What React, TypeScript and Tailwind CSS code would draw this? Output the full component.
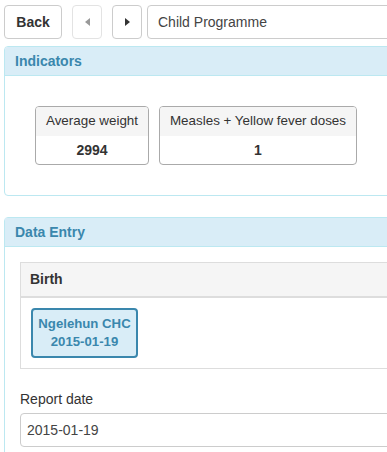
import React from "react";

const Caret: React.FC<{ dir: "left" | "right"; color: string }> = ({ dir, color }) => (
  <svg width="5" height="8" viewBox="0 0 5 8">
    {dir === "left" ? <path d="M5 0 L0 4 L5 8 Z" fill={color} /> : <path d="M0 0 L5 4 L0 8 Z" fill={color} />}
  </svg>
);

const App: React.FC = () => {
  return (
    <div className="w-[387px] h-[452px] overflow-hidden bg-white text-[14px] text-[#333] font-['Liberation_Sans',Arial,sans-serif]">
      <div className="w-[460px] pl-[4px]">
        {/* top bar */}
        <div className="flex items-center pt-[5px] h-[39px]">
          <button className="h-[34px] w-[58px] border border-[#ccc] rounded-[4px] bg-white font-bold text-[#333]">
            Back
          </button>
          <button className="ml-[10px] h-[34px] w-[30px] border border-[#e3e3e3] rounded-[4px] bg-white flex items-center justify-center">
            <Caret dir="left" color="#999" />
          </button>
          <button className="ml-[10px] h-[34px] w-[30px] border border-[#ccc] rounded-[4px] bg-white flex items-center justify-center">
            <Caret dir="right" color="#333" />
          </button>
          <div className="ml-[5px] h-[34px] flex-1 border border-[#ccc] rounded-[4px] flex items-center pl-[10px] text-[#444]">
            Child Programme
          </div>
        </div>

        {/* indicators */}
        <div className="mt-[7px] border border-[#bce8f1] rounded-[4px] overflow-hidden">
          <div className="h-[29px] bg-[#d9edf7] border-b border-[#bce8f1] flex items-center pl-[10px] font-bold text-[#3a87ad]">
            Indicators
          </div>
          <div className="h-[119px] pl-[30px] pt-[30px] flex gap-[10px] items-start text-[13.4px]">
            <div className="w-[114px] h-[59px] border border-[#aaa] rounded-[4px] overflow-hidden flex flex-col">
              <div className="h-[29px] bg-[#f5f5f5] flex items-center justify-center">Average weight</div>
              <div className="flex-1 flex items-center justify-center font-bold text-[14px]">2994</div>
            </div>
            <div className="w-[198px] h-[59px] border border-[#aaa] rounded-[4px] overflow-hidden flex flex-col">
              <div className="h-[29px] bg-[#f5f5f5] flex items-center justify-center">Measles + Yellow fever doses</div>
              <div className="flex-1 flex items-center justify-center font-bold text-[14px]">1</div>
            </div>
          </div>
        </div>

        {/* data entry */}
        <div className="mt-[21px] border border-[#bce8f1] rounded-[4px] h-[260px]">
          <div className="h-[29px] bg-[#d9edf7] border-b border-[#bce8f1] flex items-center pl-[10px] font-bold text-[#3a87ad]">
            Data Entry
          </div>
          <div className="pl-[15px] pt-[15px]">
            <div className="border border-[#ddd]">
              <div className="h-[35px] bg-[#f5f5f5] border-b-2 border-[#ddd] flex items-center pl-[9px] font-bold text-[#333]">
                Birth
              </div>
              <div className="p-[10px]">
                <div className="w-[107px] h-[50px] border-2 border-[#3a87ad] rounded-[4px] bg-[#d9edf7] flex flex-col items-center justify-center font-bold text-[13.2px] text-[#3a87ad] leading-[18px]">
                  <span>Ngelehun CHC</span>
                  <span>2015-01-19</span>
                </div>
              </div>
            </div>
            <div className="mt-[20px] leading-[20px]">Report date</div>
            <div className="mt-[4px] h-[34px] border border-[#ccc] rounded-[4px] flex items-center pl-[6px] text-[#444]">
              2015-01-19
            </div>
          </div>
        </div>
      </div>
    </div>
  );
};

export default App;
